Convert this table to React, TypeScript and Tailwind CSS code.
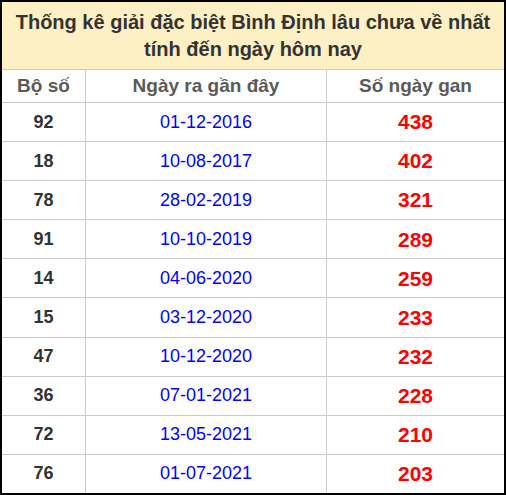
import React from 'react';

const rows: [string, string, string][] = [
  ['92', '01-12-2016', '438'],
  ['18', '10-08-2017', '402'],
  ['78', '28-02-2019', '321'],
  ['91', '10-10-2019', '289'],
  ['14', '04-06-2020', '259'],
  ['15', '03-12-2020', '233'],
  ['47', '10-12-2020', '232'],
  ['36', '07-01-2021', '228'],
  ['72', '13-05-2021', '210'],
  ['76', '01-07-2021', '203'],
];

const App: React.FC = () => {
  return (
    <div
      className="w-[506px] h-[495px] border-2 border-black bg-white flex flex-col"
      style={{ fontFamily: '"Liberation Sans", Arial, sans-serif' }}
    >
      <div className="h-[68px] bg-[#fdf0c4] border-b border-[#cccccc] flex flex-col items-center justify-center text-[20px] font-bold leading-[27px] text-[#333333]">
        <span>Thống kê giải đặc biệt Bình Định lâu chưa về nhất</span>
        <span>tính đến ngày hôm nay</span>
      </div>

      <div className="grid grid-cols-[83px_241px_1fr] h-[33px] border-b border-[#cccccc] text-[19px] font-bold text-[#5a5a5a]">
        <div className="flex items-center justify-center">Bộ số</div>
        <div className="flex items-center justify-center border-l border-[#cccccc]">Ngày ra gần đây</div>
        <div className="flex items-center justify-center border-l border-[#cccccc]">Số ngày gan</div>
      </div>

      {rows.map(([num, date, gan], index) => (
        <div
          key={num}
          className={`grid grid-cols-[83px_241px_1fr] flex-1 ${
            index < rows.length - 1 ? 'border-b border-[#cccccc]' : ''
          }`}
        >
          <div className="flex items-center justify-center text-[18px] font-bold text-[#333333]">{num}</div>
          <div className="flex items-center justify-center border-l border-[#cccccc] text-[18px] text-[#0000ff]">
            {date}
          </div>
          <div className="flex items-center justify-center border-l border-[#cccccc] text-[21px] font-bold text-[#ff0000]">
            {gan}
          </div>
        </div>
      ))}
    </div>
  );
};

export default App;
